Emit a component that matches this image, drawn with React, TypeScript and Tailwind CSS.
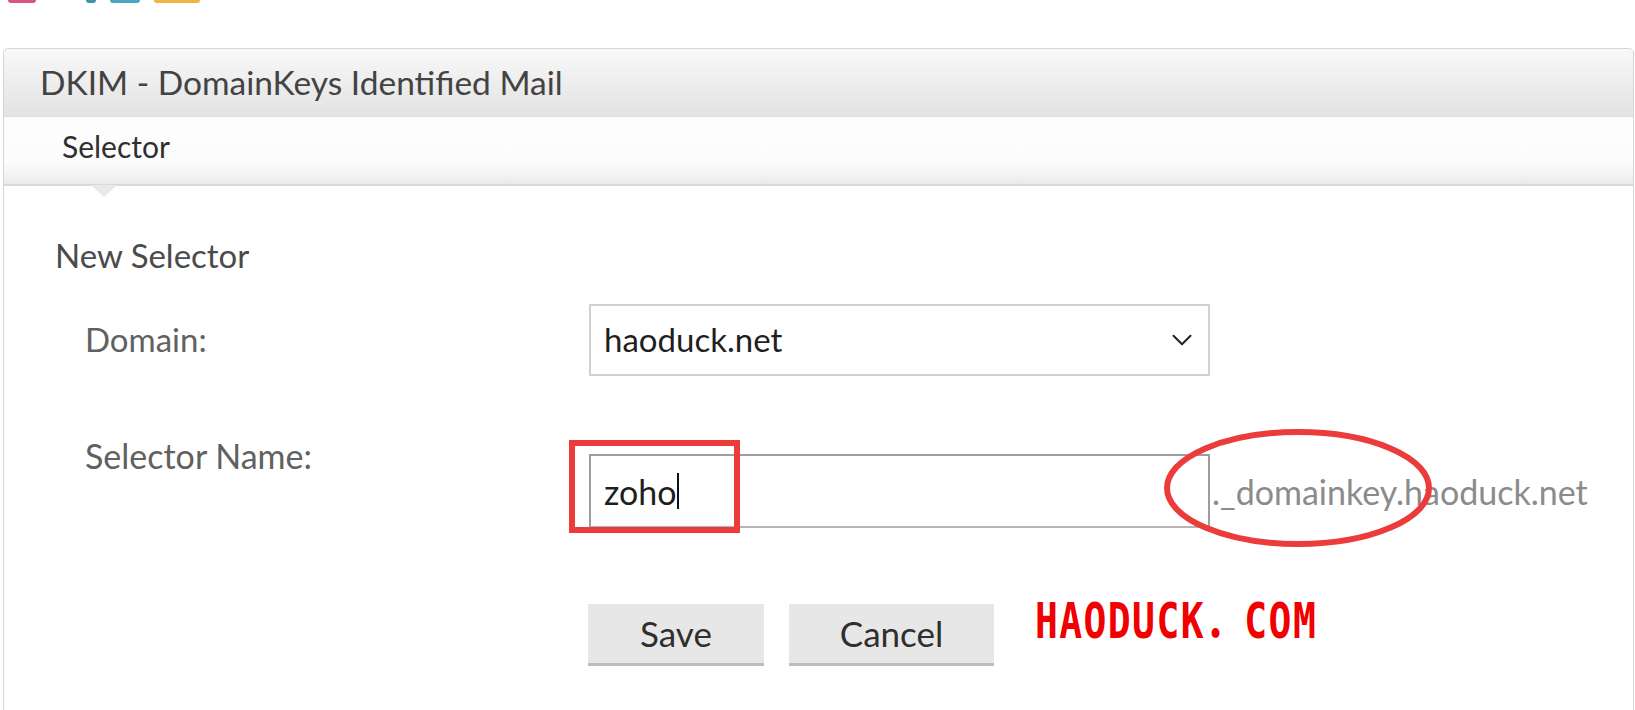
import { ChevronDown } from "lucide-react";

const App = () => {
  return (
    <div className="relative w-[1635px] h-[710px] overflow-hidden bg-white font-['Lato','Liberation_Sans',sans-serif]">
      {/* cut-off logo at the very top */}
      <div className="h-[48px] flex items-start gap-[14px] pl-[8px]">
        <div className="h-[3px] w-[28px] rounded-b-full bg-[#d9577e]" />
        <div className="h-[3px] w-[10px] ml-[36px] rounded-b-full bg-[#3b93b0]" />
        <div className="h-[3px] w-[30px] rounded-b-full bg-[#4aa7c4]" />
        <div className="h-[3px] w-[46px] rounded-b-sm bg-[#f2b541]" />
      </div>

      {/* panel */}
      <div className="ml-[3px] w-[1631px] h-[700px] border border-[#d6d6d6] rounded-tl-[5px] rounded-tr-[5px]">
        <div className="h-[68px] flex items-center pl-[36px] bg-gradient-to-b from-[#f8f8f8] to-[#e3e3e3] border-b border-[#dcdcdc] rounded-t-[5px]">
          <h1 className="text-[33.5px] leading-[40px] text-[#434343] -mt-[2px]">
            DKIM - DomainKeys Identified Mail
          </h1>
        </div>

        <div className="relative h-[69px] flex items-center pl-[58px] bg-[linear-gradient(to_bottom,#fdfdfd_0%,#fcfcfc_68%,#f1f1f1_90%,#e9e9e9_100%)] border-b-2 border-[#d9d9d9]">
          <span className="text-[30px] leading-[36px] text-[#2f2f2f] -mt-[10px]">Selector</span>
          <div className="absolute left-[87px] -bottom-[13px] w-0 h-0 border-l-[13px] border-r-[13px] border-t-[12px] border-l-transparent border-r-transparent border-t-[#e8e8e8]" />
        </div>

        <div className="pl-[51px] pt-[49px]">
          <h2 className="text-[33px] leading-[40px] text-[#4b4b4b]">New Selector</h2>

          <div className="mt-[29px] pl-[30px] flex flex-col">
            <div className="flex items-center">
              <label className="w-[504px] text-[33px] text-[#616161]">Domain:</label>
              <div className="w-[621px] h-[72px] flex items-center justify-between pl-[13px] pr-[9px] border-2 border-[#d2d2d2] bg-white">
                <span className="text-[33px] text-[#1f1f1f]">haoduck.net</span>
                <ChevronDown size={34} strokeWidth={1.4} className="text-[#222]" />
              </div>
            </div>

            <div className="mt-[60px] flex items-start">
              <label className="w-[504px] text-[34px] leading-[40px] text-[#616161]">Selector Name:</label>
              <div className="mt-[18px] flex items-center">
                <div className="w-[621px] h-[74px] flex items-center pl-[13px] border-2 border-[#9d9d9d] border-b-[#b5b5b5] bg-white">
                  <span className="text-[34px] text-[#1f1f1f]">zoho</span>
                  <span className="w-[2px] h-[36px] bg-[#111]" />
                </div>
                <span className="ml-[2px] text-[34px] text-[#8b8b8b]">._domainkey.haoduck.net</span>
              </div>
            </div>

            <div className="mt-[76px] ml-[503px] flex items-start">
              <button className="w-[176px] h-[62px] bg-[#e7e7e7] border-b-[3px] border-[#bdbdbd] text-[35px] text-[#2f2f2f]">
                Save
              </button>
              <button className="ml-[25px] w-[205px] h-[62px] bg-[#e7e7e7] border-b-[3px] border-[#bdbdbd] text-[35px] text-[#2f2f2f]">
                Cancel
              </button>
              <span className="ml-[41px] -mt-[9px] inline-block origin-top scale-y-[1.3] font-['DejaVu_Sans_Mono','Noto_Sans_CJK_SC',monospace] font-bold text-[38px] leading-[40px] tracking-[1.4px] text-[#f00000]">
                HAODUCK．COM
              </span>
            </div>
          </div>
        </div>
      </div>

      {/* red annotations */}
      <div className="absolute left-[569px] top-[440px] w-[171px] h-[93px] border-[6px] border-[#ec3b3b]" />
      <svg className="absolute left-[1160px] top-[426px]" width="276" height="124" viewBox="0 0 276 124">
        <ellipse cx="138" cy="62" rx="131" ry="56" fill="none" stroke="#ec3b3b" strokeWidth="6" />
      </svg>
    </div>
  );
};

export default App;
